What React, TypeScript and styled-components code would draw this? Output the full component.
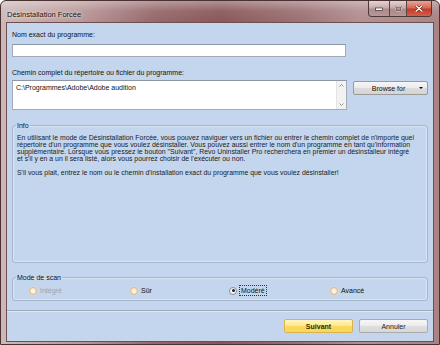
import React from 'react';
import styled, { createGlobalStyle } from 'styled-components';

const Global = createGlobalStyle`
  html, body { margin: 0; padding: 0; width: 440px; height: 345px; overflow: hidden; background: #ffffff; }
  * { box-sizing: border-box; }
`;

const Window = styled.div`
  width: 440px;
  height: 345px;
  display: flex;
  flex-direction: column;
  border: 1px solid #4a3233;
  border-radius: 6px 6px 0 0;
  background:
    linear-gradient(180deg, rgba(255,255,255,0.35) 0px, rgba(255,255,255,0.08) 10px, rgba(255,255,255,0) 22px),
    linear-gradient(90deg, #cdb8b9 0%, #b99798 18%, #95676a 35%, #885658 50%, #9a7072 68%, #b28e8f 82%, #a98384 100%);
  font-family: "Liberation Sans", Arial, sans-serif;
  color: #111;
`;

const TitleBar = styled.div`
  height: 22px;
  display: flex;
  align-items: flex-start;
  justify-content: space-between;
  padding-left: 6px;
`;

const Title = styled.span`
  font-size: 7.5px;
  line-height: 9px;
  margin-top: 8.5px;
  color: #161010;
  text-shadow: 0 0 3px rgba(255,255,255,0.95), 0 0 6px rgba(255,255,255,0.6);
`;

const Caption = styled.div`
  display: flex;
  margin-right: 7px;
  height: 16px;
  border: 1px solid #4d3839;
  border-top: none;
  border-radius: 0 0 4px 4px;
  overflow: hidden;
`;

const CapButton = styled.div<{ $w: number; $close?: boolean }>`
  width: ${p => p.$w}px;
  height: 100%;
  display: flex;
  align-items: center;
  justify-content: center;
  border-left: ${p => (p.$w === 20 ? 'none' : '1px solid #5a4445')};
  background: ${p =>
    p.$close
      ? 'linear-gradient(180deg, #e7a497 0%, #d46a58 45%, #c23c28 55%, #d0604c 100%)'
      : 'linear-gradient(180deg, rgba(255,240,240,0.5) 0%, rgba(220,195,195,0.35) 45%, rgba(150,110,110,0.3) 55%, rgba(190,160,160,0.45) 100%)'};
`;

const Client = styled.div`
  margin: 0 6px 3px 6px;
  height: 318px;
  background: #c4d6ed;
  box-shadow: 0 0 0 1px #6e5051;
  display: flex;
  flex-direction: column;
  padding: 0 5px;
`;

const Label = styled.div<{ $top: number }>`
  font-size: 7px;
  line-height: 9px;
  margin-top: ${p => p.$top}px;
  white-space: nowrap;
`;

const TextBox = styled.div`
  margin-top: 5px;
  width: 334px;
  height: 13px;
  background: #ffffff;
  border: 1px solid #a3abb6;
  border-top-color: #8d96a3;
`;

const PathRow = styled.div`
  margin-top: 3px;
  display: flex;
  align-items: flex-start;
  gap: 6px;
`;

const TextArea = styled.div`
  width: 335px;
  height: 30px;
  background: #ffffff;
  border: 1px solid #a3abb6;
  border-top-color: #8d96a3;
  display: flex;
`;

const AreaText = styled.div`
  flex: 1;
  font-size: 7px;
  line-height: 9px;
  padding: 2px 0 0 3px;
  white-space: nowrap;
`;

const ScrollBar = styled.div`
  width: 10px;
  display: flex;
  flex-direction: column;
  justify-content: space-between;
  align-items: center;
  padding: 3px 0;
  background: #f2f2f2;
  border-left: 1px solid #e4e4e4;
`;

const BrowseButton = styled.div`
  margin-top: 1px;
  width: 75px;
  height: 14px;
  border: 1px solid #9a9a9a;
  border-radius: 2px;
  background: linear-gradient(180deg, #f6f6f6 0%, #ebebeb 48%, #dcdcdc 52%, #d4d4d4 100%);
  display: flex;
  align-items: center;
  font-size: 7px;
`;

const BrowseLabel = styled.span`
  flex: 1;
  text-align: center;
  padding-left: 4px;
`;

const Arrow = styled.span`
  width: 0;
  height: 0;
  border-left: 2px solid transparent;
  border-right: 2px solid transparent;
  border-top: 2.5px solid #111;
  margin-right: 4px;
`;

const Group = styled.fieldset<{ $top: number; $h: number }>`
  margin: ${p => p.$top}px 0 0 0;
  padding: 0;
  height: ${p => p.$h}px;
  border: 1px solid #a7b6c9;
  border-radius: 3px;
  box-shadow: inset 0 0 0 1px rgba(255,255,255,0.35);
  min-width: 0;
`;

const Legend = styled.legend`
  font-size: 7px;
  line-height: 9px;
  padding: 0 1px;
  margin-left: 3px;
`;

const InfoText = styled.div`
  padding: 4px 0 0 4px;
  font-size: 6.9px;
  line-height: 7.1px;
  color: #1a1a1a;
`;

const Line = styled.div`
  white-space: nowrap;
  height: 7.1px;
`;

const RadioRow = styled.div`
  display: grid;
  grid-template-columns: 101px 99px 101px 100px;
  padding: 4px 0 0 16px;
`;

const RadioItem = styled.div<{ $disabled?: boolean }>`
  display: flex;
  align-items: center;
  gap: 3px;
  font-size: 7px;
  line-height: 9px;
  color: ${p => (p.$disabled ? '#9aa3ae' : '#111')};
`;

const RadioCircle = styled.span<{ $checked?: boolean }>`
  width: 8px;
  height: 8px;
  border-radius: 50%;
  flex: none;
  display: flex;
  align-items: center;
  justify-content: center;
  border: 1px solid ${p => (p.$checked ? '#8b8f96' : '#d8b98c')};
  background: ${p =>
    p.$checked
      ? 'radial-gradient(circle, #ffffff 0%, #eef0f3 100%)'
      : 'radial-gradient(circle, #fffcf4 0%, #f7e6c6 70%, #efd3a6 100%)'};
  box-shadow: ${p => (p.$checked ? 'none' : '0 0 2px rgba(255,225,170,0.9)')};
`;

const Dot = styled.span`
  width: 3px;
  height: 3px;
  border-radius: 50%;
  background: #222;
`;

const FocusText = styled.span`
  outline: 1px dotted #333;
  outline-offset: 0;
  padding: 0 1px;
`;

const Separator = styled.div`
  margin-top: 9px;
  height: 2px;
  border-top: 1px solid #9eabbb;
  border-bottom: 1px solid #dbe6f4;
  margin-left: -5px;
  margin-right: -5px;
`;

const ButtonRow = styled.div`
  margin-top: 7px;
  display: flex;
  justify-content: flex-end;
  gap: 6px;
`;

const DialogButton = styled.div<{ $primary?: boolean }>`
  width: 69px;
  height: 14px;
  border-radius: 2px;
  display: flex;
  align-items: center;
  justify-content: center;
  font-size: 7px;
  font-weight: ${p => (p.$primary ? 700 : 400)};
  color: ${p => (p.$primary ? '#3a2a00' : '#222')};
  border: 1px solid ${p => (p.$primary ? '#d9b44a' : '#aaaaaa')};
  background: ${p =>
    p.$primary
      ? 'linear-gradient(180deg, #fff6c4 0%, #ffe98a 45%, #fcd85a 55%, #f8d760 100%)'
      : 'linear-gradient(180deg, #f6f6f6 0%, #ececec 48%, #dedede 52%, #d8d8d8 100%)'};
`;

const infoLines = [
  "En utilisant le mode de Désinstallation Forcée, vous pouvez naviguer vers un fichier ou entrer le chemin complet de n'importe quel",
  "répertoire d'un programme que vous voulez désinstaller. Vous pouvez aussi entrer le nom d'un programme en tant qu'information",
  'supplémentaire. Lorsque vous pressez le bouton "Suivant", Revo Uninstaller Pro recherchera en premier un désinstalleur intégré',
  "et s'il y en a un il sera listé, alors vous pourrez choisir de l'exécuter ou non.",
  '',
  "S'il vous plait, entrez le nom ou le chemin d'installation exact du programme que vous voulez désinstaller!",
];

const Chevron: React.FC<{ up?: boolean }> = ({ up }) => (
  <svg width="5" height="3" viewBox="0 0 5 3">
    <path d={up ? 'M0.5 2.5 L2.5 0.5 L4.5 2.5' : 'M0.5 0.5 L2.5 2.5 L4.5 0.5'} stroke="#8a8a8a" strokeWidth="0.9" fill="none" />
  </svg>
);

export default function App() {
  return (
    <>
      <Global />
      <Window>
        <TitleBar>
          <Title>Désinstallation Forcée</Title>
          <Caption>
            <CapButton $w={20}>
              <svg width="8" height="5" viewBox="0 0 8 5">
                <rect x="0.5" y="2" width="7" height="2.5" fill="#fff" stroke="#3a2a2a" strokeWidth="0.7" />
              </svg>
            </CapButton>
            <CapButton $w={17}>
              <svg width="7" height="6" viewBox="0 0 7 6">
                <rect x="0.7" y="0.7" width="5.6" height="4.6" fill="none" stroke="#3a2a2a" strokeWidth="1.4" />
                <rect x="0.7" y="0.7" width="5.6" height="4.6" fill="none" stroke="#fff" strokeWidth="0.7" />
              </svg>
            </CapButton>
            <CapButton $w={25} $close>
              <svg width="8" height="7" viewBox="0 0 8 7">
                <path d="M1 0.8 L7 6.2 M7 0.8 L1 6.2" stroke="#5a1a12" strokeWidth="2.4" strokeLinecap="round" />
                <path d="M1 0.8 L7 6.2 M7 0.8 L1 6.2" stroke="#ffffff" strokeWidth="1.3" strokeLinecap="round" />
              </svg>
            </CapButton>
          </Caption>
        </TitleBar>
        <Client>
          <Label $top={7}>Nom exact du programme:</Label>
          <TextBox />
          <Label $top={11}>Chemin complet du répertoire ou fichier du programme:</Label>
          <PathRow>
            <TextArea>
              <AreaText>C:\Programmes\Adobe\Adobe audition</AreaText>
              <ScrollBar>
                <Chevron up />
                <Chevron />
              </ScrollBar>
            </TextArea>
            <BrowseButton>
              <BrowseLabel>Browse for</BrowseLabel>
              <Arrow />
            </BrowseButton>
          </PathRow>
          <Group $top={11} $h={142}>
            <Legend>Info</Legend>
            <InfoText>
              {infoLines.map((l, i) => (
                <Line key={i}>{l}</Line>
              ))}
            </InfoText>
          </Group>
          <Group $top={10} $h={28}>
            <Legend>Mode de scan</Legend>
            <RadioRow>
              <RadioItem $disabled>
                <RadioCircle />
                Intégré
              </RadioItem>
              <RadioItem>
                <RadioCircle />
                Sûr
              </RadioItem>
              <RadioItem>
                <RadioCircle $checked>
                  <Dot />
                </RadioCircle>
                <FocusText>Modéré</FocusText>
              </RadioItem>
              <RadioItem>
                <RadioCircle />
                Avancé
              </RadioItem>
            </RadioRow>
          </Group>
          <Separator />
          <ButtonRow>
            <DialogButton $primary>Suivant</DialogButton>
            <DialogButton>Annuler</DialogButton>
          </ButtonRow>
        </Client>
      </Window>
    </>
  );
}
